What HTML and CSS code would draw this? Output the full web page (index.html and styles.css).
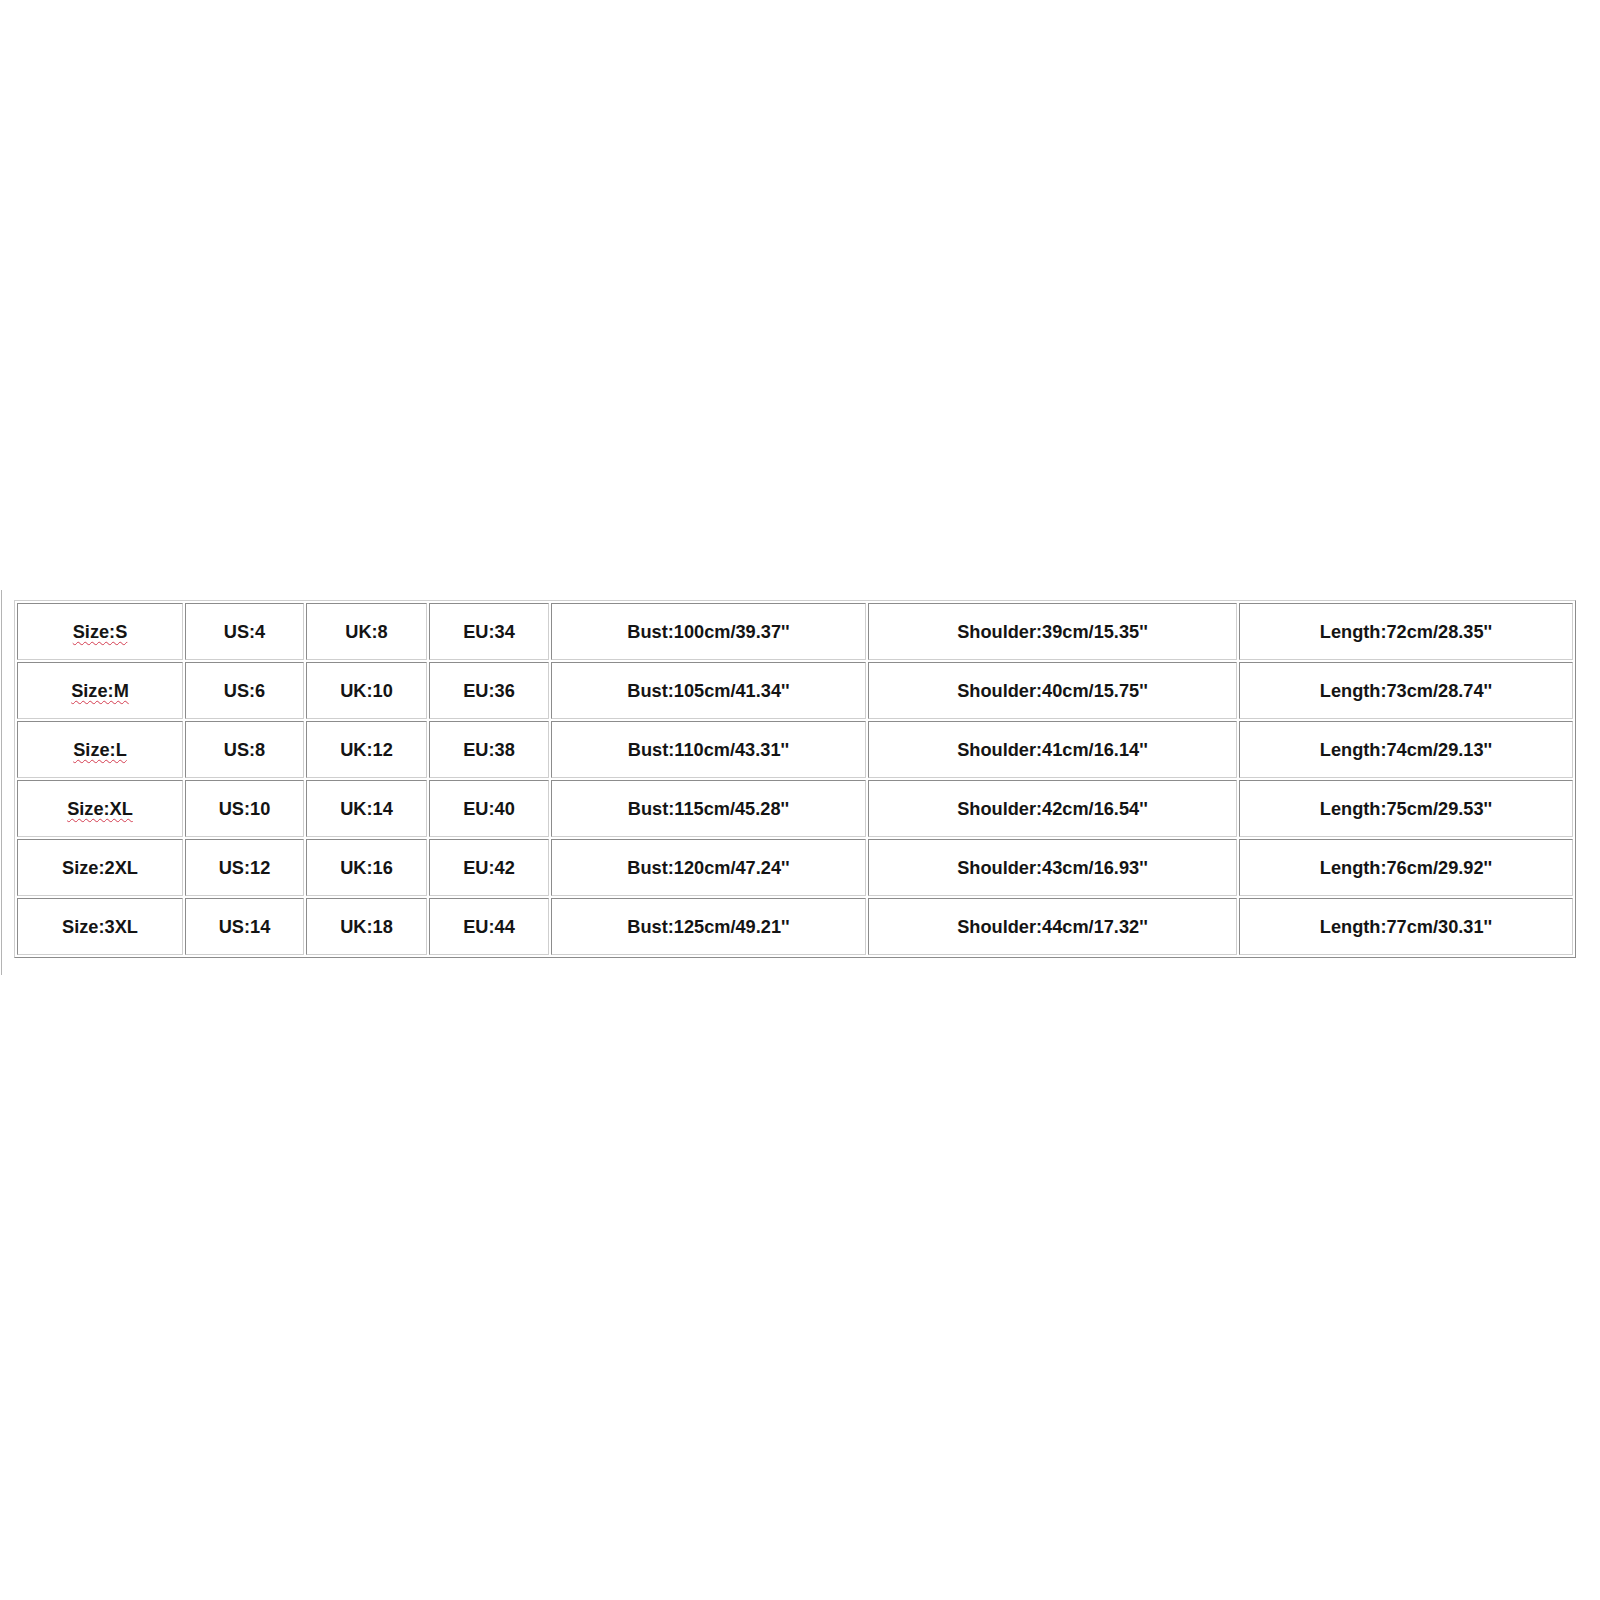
FILE: index.html
```html
<!DOCTYPE html>
<html>
<head>
<meta charset="utf-8">
<title>Size chart</title>
<link rel="stylesheet" href="styles.css">
</head>
<body>
<div class="frame">
  <table class="chart">
    <tr>
      <td class="c1"><span class="spell">Size:S</span></td>
      <td class="c2">US:4</td>
      <td class="c3">UK:8</td>
      <td class="c4">EU:34</td>
      <td class="c5">Bust:100cm/39.37''</td>
      <td class="c6">Shoulder:39cm/15.35''</td>
      <td class="c7">Length:72cm/28.35''</td>
    </tr>
    <tr>
      <td><span class="spell">Size:M</span></td>
      <td>US:6</td>
      <td>UK:10</td>
      <td>EU:36</td>
      <td>Bust:105cm/41.34''</td>
      <td>Shoulder:40cm/15.75''</td>
      <td>Length:73cm/28.74''</td>
    </tr>
    <tr>
      <td><span class="spell">Size:L</span></td>
      <td>US:8</td>
      <td>UK:12</td>
      <td>EU:38</td>
      <td>Bust:110cm/43.31''</td>
      <td>Shoulder:41cm/16.14''</td>
      <td>Length:74cm/29.13''</td>
    </tr>
    <tr>
      <td><span class="spell">Size:XL</span></td>
      <td>US:10</td>
      <td>UK:14</td>
      <td>EU:40</td>
      <td>Bust:115cm/45.28''</td>
      <td>Shoulder:42cm/16.54''</td>
      <td>Length:75cm/29.53''</td>
    </tr>
    <tr>
      <td>Size:2XL</td>
      <td>US:12</td>
      <td>UK:16</td>
      <td>EU:42</td>
      <td>Bust:120cm/47.24''</td>
      <td>Shoulder:43cm/16.93''</td>
      <td>Length:76cm/29.92''</td>
    </tr>
    <tr>
      <td>Size:3XL</td>
      <td>US:14</td>
      <td>UK:18</td>
      <td>EU:44</td>
      <td>Bust:125cm/49.21''</td>
      <td>Shoulder:44cm/17.32''</td>
      <td>Length:77cm/30.31''</td>
    </tr>
  </table>
</div>
</body>
</html>
```

FILE: styles.css
```css
html, body {
  margin: 0;
  padding: 0;
  background: #ffffff;
}

body {
  font-family: "Liberation Sans", Arial, sans-serif;
}

.frame {
  margin-top: 590px;
  margin-left: 1px;
  border-left: 1px solid #b4b4b4;
  padding: 10px 0 17px 12px;
}

.chart {
  table-layout: fixed;
  width: 1562px;
  border-collapse: separate;
  border-spacing: 2px;
  border-style: solid;
  border-width: 1px;
  border-color: #cfcfcf #8c8c8c #8c8c8c #cfcfcf;
}

.chart td {
  box-sizing: border-box;
  height: 57px;
  padding: 1px 0 0 0;
  border-style: solid;
  border-width: 1px;
  border-color: #8c8c8c #cfcfcf #cfcfcf #8c8c8c;
  text-align: center;
  vertical-align: middle;
  font-size: 18.2px;
  font-weight: bold;
  color: #141414;
  white-space: nowrap;
}

.c1 { width: 166px; }
.c2 { width: 119px; }
.c3 { width: 121px; }
.c4 { width: 120px; }
.c5 { width: 315px; }
.c6 { width: 369px; }
.c7 { width: 334px; }

.spell {
  text-decoration-line: underline;
  text-decoration-style: wavy;
  text-decoration-color: #d43c50;
  text-decoration-thickness: 1px;
  text-underline-offset: 3px;
}
```
